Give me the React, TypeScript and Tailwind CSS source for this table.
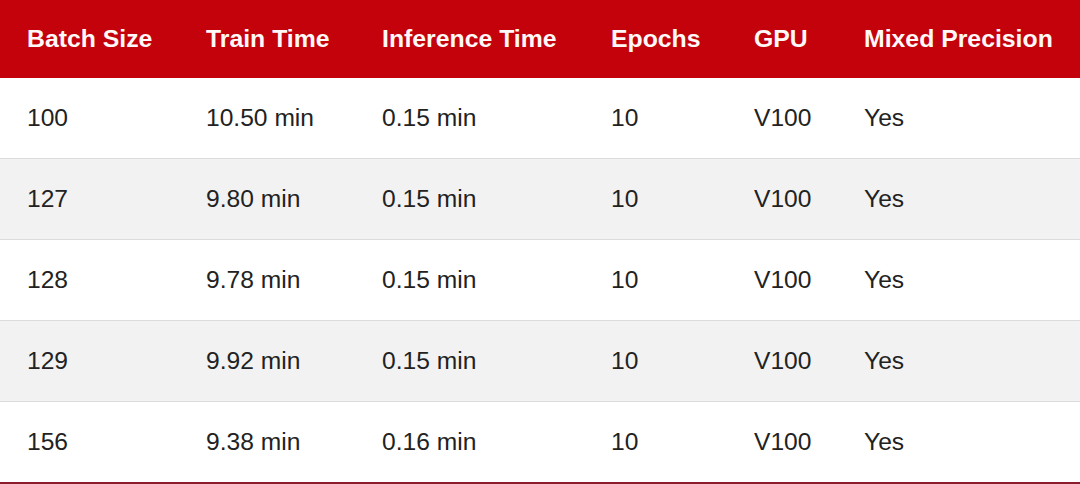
import React from 'react';

const headers = ['Batch Size', 'Train Time', 'Inference Time', 'Epochs', 'GPU', 'Mixed Precision'];

const rows = [
  ['100', '10.50 min', '0.15 min', '10', 'V100', 'Yes'],
  ['127', '9.80 min', '0.15 min', '10', 'V100', 'Yes'],
  ['128', '9.78 min', '0.15 min', '10', 'V100', 'Yes'],
  ['129', '9.92 min', '0.15 min', '10', 'V100', 'Yes'],
  ['156', '9.38 min', '0.16 min', '10', 'V100', 'Yes'],
];

// anchos de columna medidos sobre la captura
const cols = 'grid-cols-[179px_176px_229px_143px_110px_1fr]';

const App: React.FC = () => {
  return (
    <div className="w-[1080px] h-[484px] bg-white overflow-hidden" style={{ fontFamily: '"Liberation Sans", Arial, sans-serif' }}>
      <div className={`grid ${cols} h-[78px] items-center bg-[#c3020c] text-[#fff8f8] font-bold text-[24.8px]`}>
        {headers.map((h) => (
          <div key={h} className="pl-[27px] whitespace-nowrap">{h}</div>
        ))}
      </div>
      {rows.map((r, i) => (
        <div
          key={i}
          className={`grid ${cols} items-center text-[24.6px] text-[#222222] ${
            i % 2 === 1 ? 'bg-[#f2f2f2]' : 'bg-white'
          } ${i === rows.length - 1 ? 'border-b-2 border-[#8c1b2d] h-[82px]' : 'border-b border-[#dcdcdc] h-[81px]'}`}
        >
          {r.map((c, j) => (
            <div key={j} className="pl-[27px] whitespace-nowrap">{c}</div>
          ))}
        </div>
      ))}
    </div>
  );
};

export default App;
